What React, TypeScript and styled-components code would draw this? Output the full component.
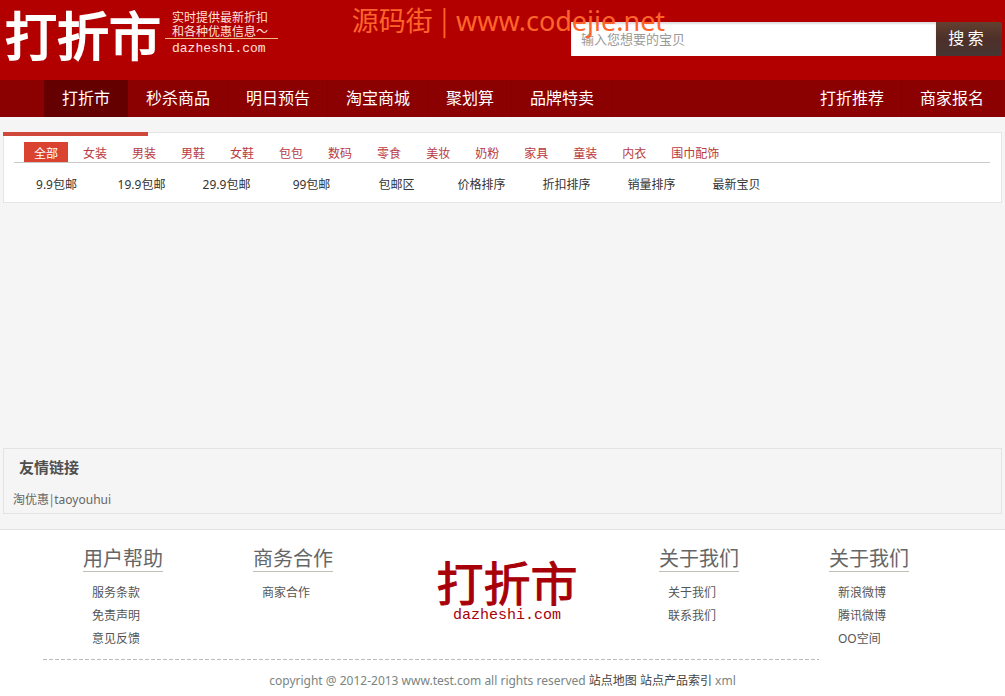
import React from "react";
import styled, { createGlobalStyle } from "styled-components";

const sans = `"Noto Sans", "Noto Sans CJK SC", sans-serif`;
const cjk = `"Noto Sans CJK SC", sans-serif`;
const mono = `"Liberation Mono", monospace`;

const GlobalStyle = createGlobalStyle`
  * { box-sizing: border-box; }
  body { margin: 0; background: #f5f5f5; font: 12px/20px ${sans}; color: #444; }
  a { color: inherit; text-decoration: none; }
  ul, h2, p { margin: 0; padding: 0; list-style: none; }
`;

const Watermark = styled.div`
  position: absolute;
  top: 2px;
  left: 35%;
  z-index: 2;
  font-size: 27px;
  line-height: 38px;
  color: #ff642b;
  white-space: nowrap;
  pointer-events: none;
`;

const Bar = styled.span`
  padding: 0 1px;
  font-family: ${cjk};
  line-height: 1;
`;

const Header = styled.header`
  display: flex;
  justify-content: space-between;
  align-items: flex-start;
  height: 80px;
  padding: 0 3px 0 5px;
  background: #b20000;
`;

const Brand = styled.a`
  display: flex;
  gap: 4px;
  padding-top: 8px;
  color: #fff;
`;

const BrandName = styled.span`
  font: 52px/52px ${cjk};
  -webkit-text-stroke: 2px currentColor;
`;

const BrandSide = styled.span`
  display: flex;
  flex-direction: column;
  padding-top: 2px;
`;

const Tagline = styled.span`
  width: 113px;
  padding: 0 7px;
  border-bottom: 1px solid #f0c080;
  font: 12px/14px ${cjk};
  color: #ffe2dc;
  white-space: nowrap;
`;

const BrandDomain = styled.span`
  padding-left: 7px;
  font: 13px/20px ${mono};
  color: #ffe2dc;
`;

const Search = styled.form`
  display: flex;
  width: 431px;
  max-width: 50%;
  height: 34px;
  margin-top: 22px;
`;

const SearchInput = styled.input`
  flex: 1;
  min-width: 0;
  padding: 0 10px;
  border: 0;
  outline: 0;
  background: #fff;
  box-shadow: inset 0 2px 2px #ddd;
  font: 13px ${sans};
  color: #333;
  &::placeholder { color: #999; opacity: 1; }
`;

const SearchButton = styled.button`
  width: 66px;
  padding: 0 18px 4px 12px;
  border: 0;
  border-radius: 0 3px 3px 0;
  background: linear-gradient(#63402f, #4d3029 50%, #473532);
  font: 16px ${cjk};
  color: #fff;
  white-space: nowrap;
`;

const Nav = styled.nav`
  display: flex;
  height: 37px;
  padding: 0 3px 0 44px;
  background: #8b0000;
`;

const NavLink = styled.a<{ $active?: boolean; $push?: boolean }>`
  padding: 0 18px;
  margin-left: ${(p) => (p.$push ? "auto" : 0)};
  background: ${(p) => (p.$active ? "#640000" : "transparent")};
  box-shadow: inset -1px 0 ${(p) => (p.$active ? "#640000" : "#840000")};
  font: 16px/35px ${cjk};
  color: #fff;
  white-space: nowrap;
`;

const Main = styled.main`
  padding: 15px 3px;
`;

const Filters = styled.section`
  padding: 0 11px 7px 10px;
  border: 1px solid #e5e5e5;
  border-top: 0;
  background: #fff;
`;

const Accent = styled.div`
  height: 4px;
  border: 1px solid #e5e5e5;
  border-bottom: 0;
  background: linear-gradient(#cf483b, #cf483b) 0 0 / 145px 4px no-repeat border-box #fff;
  border-image: linear-gradient(to right, #cf483b 145px, #e5e5e5 145px) 1;
`;

const Categories = styled.ul`
  display: flex;
  gap: 5px;
  padding: 6px 10px 0;
  border-bottom: 1px solid #c9c9c9;
`;

const Category = styled.a<{ $active?: boolean }>`
  display: block;
  padding: 3px 10px 0;
  background: ${(p) => (p.$active ? "#d9432f" : "transparent")};
  line-height: 17px;
  color: ${(p) => (p.$active ? "#fff" : "#b93a43")};
  white-space: nowrap;
`;

const Sorts = styled.ul`
  display: flex;
  padding-top: 12px;
`;

const Sort = styled.li`
  width: 85px;
  text-align: center;
  color: #333;
`;

const Products = styled.section`
  min-height: 245px;
`;

const Friends = styled.section`
  padding: 8px 9px 3px;
  border: 1px solid #e3e3e3;
`;

const FriendsTitle = styled.h2`
  padding: 0 6px;
  font: bold 15px/20px ${cjk};
  color: #505050;
`;

const FriendLinks = styled.p`
  padding-top: 13px;
  color: #666;
`;

const Footer = styled.footer`
  padding-bottom: 6px;
  border-top: 1px solid #e3e3e3;
  background: #fff;
`;

const Columns = styled.div`
  display: grid;
  grid-template-columns: 170fr 170fr 236fr 170fr 176fr;
  min-height: 129px;
  padding: 14px 0 0 83px;
`;

const ColumnTitle = styled.h2`
  width: fit-content;
  border-bottom: 1px solid #c0c0b8;
  font: 20px/27px ${cjk};
  color: #666;
`;

const ColumnLinks = styled.ul`
  padding: 9px 9px 0;
  line-height: 23px;
  color: #555;
`;

const FooterLogo = styled.a`
  display: flex;
  flex-direction: column;
  width: 168px;
  padding-top: 10px;
  text-align: center;
  color: #a80008;
`;

const FooterLogoName = styled.span`
  font: 47px/54px ${cjk};
  -webkit-text-stroke: 1px currentColor;
`;

const FooterLogoDomain = styled.span`
  font: 15px/16px ${mono};
`;

const Divider = styled.div`
  width: 776px;
  max-width: 90%;
  height: 1px;
  margin-left: 43px;
  background: repeating-linear-gradient(to right, #bbb 0 4px, transparent 4px 6px);
`;

const Copyright = styled.p`
  padding-top: 11px;
  text-align: center;
  color: #7a8582;
  a { color: #444; }
`;

const leftNav = ["打折市", "秒杀商品", "明日预告", "淘宝商城", "聚划算", "品牌特卖"];
const rightNav = ["打折推荐", "商家报名"];
const categories = ["全部", "女装", "男装", "男鞋", "女鞋", "包包", "数码", "零食", "美妆", "奶粉", "家具", "童装", "内衣", "围巾配饰"];
const sorts = ["9.9包邮", "19.9包邮", "29.9包邮", "99包邮", "包邮区", "价格排序", "折扣排序", "销量排序", "最新宝贝"];

function LinkColumn({ title, links }: { title: string; links: string[] }) {
  return (
    <section>
      <ColumnTitle>{title}</ColumnTitle>
      <ColumnLinks>
        {links.map((link) => (
          <li key={link}><a href="#">{link}</a></li>
        ))}
      </ColumnLinks>
    </section>
  );
}

export default function App() {
  return (
    <>
      <GlobalStyle />
      <Watermark>源码街 <Bar>|</Bar> www.codejie.net</Watermark>
      <Header>
        <Brand href="#">
          <BrandName>打折市</BrandName>
          <BrandSide>
            <Tagline>实时提供最新折扣<br />和各种优惠信息～</Tagline>
            <BrandDomain>dazheshi.com</BrandDomain>
          </BrandSide>
        </Brand>
        <Search onSubmit={(e) => e.preventDefault()}>
          <SearchInput aria-label="搜索" placeholder="输入您想要的宝贝" />
          <SearchButton type="submit">搜 索</SearchButton>
        </Search>
      </Header>
      <Nav>
        {leftNav.map((label, i) => (
          <NavLink href="#" key={label} $active={i === 0}>{label}</NavLink>
        ))}
        {rightNav.map((label, i) => (
          <NavLink href="#" key={label} $push={i === 0}>{label}</NavLink>
        ))}
      </Nav>
      <Main>
        <Accent />
        <Filters>
          <Categories>
            {categories.map((label, i) => (
              <li key={label}><Category href="#" $active={i === 0}>{label}</Category></li>
            ))}
          </Categories>
          <Sorts>
            {sorts.map((label) => (
              <Sort key={label}><a href="#">{label}</a></Sort>
            ))}
          </Sorts>
        </Filters>
        <Products />
        <Friends>
          <FriendsTitle>友情链接</FriendsTitle>
          <FriendLinks><a href="#">淘优惠</a><Bar>|</Bar><a href="#">taoyouhui</a></FriendLinks>
        </Friends>
      </Main>
      <Footer>
        <Columns>
          <LinkColumn title="用户帮助" links={["服务条款", "免责声明", "意见反馈"]} />
          <LinkColumn title="商务合作" links={["商家合作"]} />
          <FooterLogo href="#">
            <FooterLogoName>打折市</FooterLogoName>
            <FooterLogoDomain>dazheshi.com</FooterLogoDomain>
          </FooterLogo>
          <LinkColumn title="关于我们" links={["关于我们", "联系我们"]} />
          <LinkColumn title="关于我们" links={["新浪微博", "腾讯微博", "OO空间"]} />
        </Columns>
        <Divider />
        <Copyright>
          copyright @ 2012-2013 www.test.com all rights reserved <a href="#">站点地图</a> <a href="#">站点产品索引</a> xml
        </Copyright>
      </Footer>
    </>
  );
}
